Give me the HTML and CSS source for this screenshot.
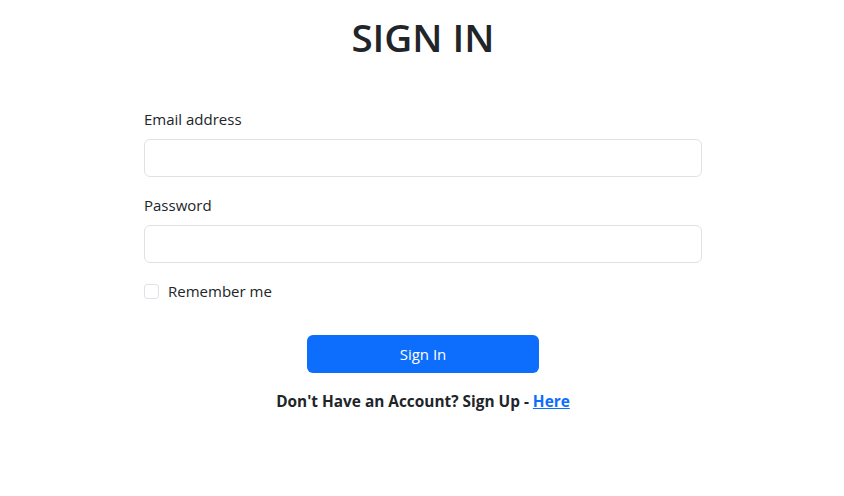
FILE: index.html
```html
<!DOCTYPE html>
<html lang="en">
<head>
<meta charset="utf-8">
<title>Sign In</title>
<link rel="stylesheet" href="styles.css">
</head>
<body>
<main class="page">
  <h1 class="title">SIGN IN</h1>
  <form class="form">
    <div class="field">
      <label class="label" for="email">Email address</label>
      <input class="input" id="email" type="email">
    </div>
    <div class="field">
      <label class="label" for="password">Password</label>
      <input class="input" id="password" type="password">
    </div>
    <div class="check">
      <input class="checkbox" id="remember" type="checkbox">
      <label class="check-label" for="remember">Remember me</label>
    </div>
    <div class="actions">
      <button class="btn" type="button">Sign In</button>
    </div>
    <p class="signup">Don't Have an Account? Sign Up - <a class="link" href="#">Here</a></p>
  </form>
</main>
</body>
</html>
```
FILE: styles.css
```css
* { box-sizing: border-box; }
html, body { margin: 0; padding: 0; background: #fff; }
body {
  font-family: "Open Sans", "Noto Sans", sans-serif;
  font-size: 15px;
  line-height: 24px;
  color: #212529;
}
.page {
  display: flex;
  flex-direction: column;
  align-items: center;
  padding-left: 2px;
}
.title {
  margin: 12px 0 0;
  font-size: 38.6px;
  line-height: 50px;
  font-weight: 600;
  letter-spacing: 0;
}
.form {
  width: 558px;
  margin-top: 45px;
}
.field { margin-bottom: 16px; }
.label {
  display: block;
  margin-bottom: 8px;
}
.input {
  display: block;
  width: 100%;
  height: 38px;
  border: 1px solid #dee2e6;
  border-radius: 6px;
  background: #fff;
  font: inherit;
  padding: 6px 12px;
}
.check {
  display: flex;
  align-items: center;
  gap: 9px;
  height: 24px;
}
.checkbox {
  appearance: none;
  -webkit-appearance: none;
  width: 15px;
  height: 15px;
  margin: 0;
  border: 1px solid #dee2e6;
  border-radius: 3px;
  background: #fff;
}
.actions {
  display: flex;
  justify-content: center;
  margin-top: 32px;
}
.btn {
  width: 232px;
  height: 38px;
  border: none;
  border-radius: 6px;
  background: #0d6efd;
  color: #fff;
  font: inherit;
  padding: 0;
}
.signup {
  margin: 17px 0 0;
  text-align: center;
  font-weight: 700;
  font-size: 15.4px;
}
.link { color: #0d6efd; text-decoration: underline; }
```
